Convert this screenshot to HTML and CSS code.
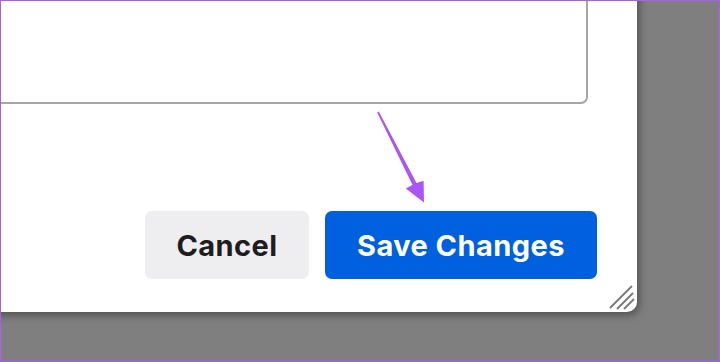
FILE: index.html
```html
<!DOCTYPE html>
<html>
<head>
<meta charset="utf-8">
<link rel="stylesheet" href="styles.css">
</head>
<body>
<div class="frame">
  <div class="panel">
    <div class="textbox"></div>
    <div class="actions">
      <button class="btn btn-cancel">Cancel</button>
      <button class="btn btn-save">Save Changes</button>
    </div>
    <svg class="grip" width="28" height="28" viewBox="0 0 28 28">
      <line x1="3" y1="26" x2="25" y2="4" stroke="#7b7b7b" stroke-width="2"/>
      <line x1="10" y1="27" x2="26" y2="11" stroke="#7b7b7b" stroke-width="2"/>
      <line x1="17" y1="27" x2="27" y2="17" stroke="#7b7b7b" stroke-width="2"/>
    </svg>
  </div>
  <svg class="arrow" width="720" height="362" viewBox="0 0 720 362">
    <polygon fill="#ac55f5" points="377.2,112.4 412.5,185 405.8,188.6 424,202.5 423.6,180.8 416.5,183 378.8,111.6"/>
  </svg>
</div>
</body>
</html>
```
FILE: styles.css
```css
html, body {
  margin: 0;
  padding: 0;
  background: #7f7f7f;
}
.frame {
  position: relative;
  width: 720px;
  height: 362px;
  box-sizing: border-box;
  border: 1px solid #ae5bf6;
  overflow: hidden;
  background: #7f7f7f;
}
.panel {
  position: relative;
  margin-top: -20px;
  margin-left: -20px;
  width: 656px;
  height: 331px;
  background: #ffffff;
  border-bottom-right-radius: 10px;
  box-shadow: 2px 3px 8px rgba(0, 0, 0, 0.38);
  display: flex;
  flex-direction: column;
}
.textbox {
  box-sizing: border-box;
  width: 607px;
  height: 123px;
  border: 2px solid #a6a6a6;
  border-radius: 7px;
}
.actions {
  display: flex;
  justify-content: flex-end;
  gap: 16px;
  margin-top: 107px;
  padding-right: 40px;
}
.btn {
  height: 68px;
  border: none;
  border-radius: 7px;
  font-family: Inter, "Liberation Sans", sans-serif;
  font-weight: 700;
  font-size: 29px;
  letter-spacing: 0.45px;
  padding: 0;
  cursor: pointer;
}
.btn-cancel {
  width: 164px;
  background: #eeeef0;
  color: #1d1d1f;
}
.btn-save {
  width: 272px;
  background: #0060df;
  color: #ffffff;
}
.grip {
  position: absolute;
  right: 2px;
  bottom: 2px;
}
.arrow {
  position: absolute;
  left: -1px;
  top: -1px;
  pointer-events: none;
}
```
